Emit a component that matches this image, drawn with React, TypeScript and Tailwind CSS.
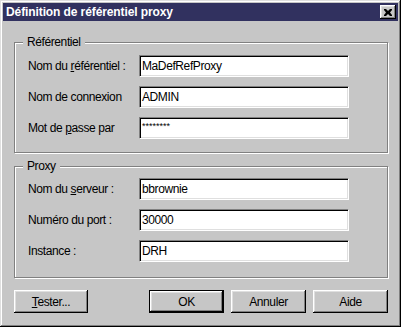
import React from "react";

const font = { fontFamily: '"Liberation Sans", Arial, sans-serif' };

function Field({ label, value, small }: { label: React.ReactNode; value: string; small?: boolean }) {
  return (
    <div className="flex items-center h-[22px]">
      <div className="w-[124px] pl-[13px] text-[12px] tracking-[-0.4px] text-black leading-none">{label}</div>
      <div className="w-[210px] h-[22px] bg-white border border-t-[#808080] border-l-[#808080] border-b-white border-r-white shadow-[inset_1px_1px_#000,inset_-1px_-1px_#dfdfdf] flex items-center pl-[2px]">
        {small ? (
          <span className="text-[9px] leading-none self-start mt-[4px] tracking-[0px]">********</span>
        ) : (
          <span className="text-[12px] tracking-[-0.4px] leading-none">{value}</span>
        )}
      </div>
    </div>
  );
}

function Group({ title, h, pt, children }: { title: string; h: string; pt: string; children: React.ReactNode }) {
  return (
    <div className={`relative w-[374px] ${h} ${pt} border border-[#808080] shadow-[inset_1px_1px_#fff,1px_1px_#fff]`}>
      <div className="absolute left-[8px] top-[-8px] bg-[#c6c6c6] px-[4px] text-[12px] tracking-[-0.4px] leading-[14px]">{title}</div>
      <div className="flex flex-col gap-[9px]">{children}</div>
    </div>
  );
}

function Button({ children, def, w = "w-[75px]" }: { children: React.ReactNode; def?: boolean; w?: string }) {
  const inner = (
    <div className="h-full w-full flex items-center justify-center text-[12px] tracking-[-0.4px] bg-[#c6c6c6] shadow-[inset_-1px_-1px_#000,inset_1px_1px_#fff,inset_-2px_-2px_#808080,inset_2px_2px_#dfdfdf]">
      {children}
    </div>
  );
  return def ? (
    <div className={`${w} h-[23px] border border-black`}>{inner}</div>
  ) : (
    <div className={`${w} h-[23px]`}>{inner}</div>
  );
}

export default function App() {
  return (
    <div style={font} className="w-[401px] h-[327px] bg-[#c6c6c6] p-[3px] shadow-[inset_-1px_-1px_#000,inset_1px_1px_#dfdfdf,inset_-2px_-2px_#808080,inset_2px_2px_#fff] flex flex-col text-black">
      <div className="h-[18px] bg-[#31315f] flex items-center justify-between pl-[3px] pr-[2px]">
        <span className="text-white font-bold text-[12px] tracking-[-0.1px] leading-none">Définition de référentiel proxy</span>
        <div className="w-[16px] h-[14px] bg-[#c6c6c6] shadow-[inset_-1px_-1px_#000,inset_1px_1px_#fff,inset_-2px_-2px_#808080,inset_2px_2px_#dfdfdf] flex items-center justify-center">
          <svg width="8" height="7" viewBox="0 0 8 7">
            <path d="M0 0h2l2 2 2-2h2v1l-2 2.5 2 2.5v1h-2l-2-2-2 2h-2v-1l2-2.5-2-2.5z" fill="#000" />
          </svg>
        </div>
      </div>
      <div className="pl-[11px] pt-[21px] flex flex-col">
        <Group title="Référentiel" h="h-[111px]" pt="pt-[12px]">
          <Field label={<>Nom du <u>r</u>éférentiel :</>} value="MaDefRefProxy" />
          <Field label="Nom de connexion" value="ADMIN" />
          <Field label={<>Mot de <u>p</u>asse par</>} value="" small />
        </Group>
        <div className="h-[13px]" />
        <Group title="Proxy" h="h-[112px]" pt="pt-[11px]">
          <Field label={<>Nom du <u>s</u>erveur :</>} value="bbrownie" />
          <Field label="Numéro du port :" value="30000" />
          <Field label="Instance :" value="DRH" />
        </Group>
        <div className="flex items-center mt-[12px] w-[374px]">
          <Button><span><u>T</u>ester...</span></Button>
          <div className="ml-[61px]">
            <Button def>OK</Button>
          </div>
          <div className="ml-[7px]">
            <Button>Annuler</Button>
          </div>
          <div className="ml-[7px]">
            <Button>Aide</Button>
          </div>
        </div>
      </div>
    </div>
  );
}
